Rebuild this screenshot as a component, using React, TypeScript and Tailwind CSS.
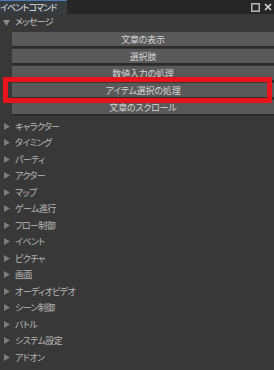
import React from 'react';

const font = "font-['Noto_Sans_CJK_JP','Noto_Sans',sans-serif] [font-feature-settings:'palt']";

const Arrow = ({ open }: { open?: boolean }) => (
    <svg width="7" height="7" viewBox="0 0 7 7" className="shrink-0">
        {open ? <polygon points="0,1 7,1 3.5,7" fill="#8a8a8a" /> : <polygon points="1,0 7,3.5 1,7" fill="#7c7c7c" />}
    </svg>
);

const buttons = ['文章の表示', '選択肢', '数値入力の処理', 'アイテム選択の処理', '文章のスクロール'];

const groups = [
    'キャラクター',
    'タイミング',
    'パーティ',
    'アクター',
    'マップ',
    'ゲーム進行',
    'フロー制御',
    'イベント',
    'ピクチャ',
    '画面',
    'オーディオビデオ',
    'シーン制御',
    'バトル',
    'システム設定',
    'アドオン',
];

export default function App() {
    return (
        <div className={`relative w-[274px] h-[370px] flex flex-col bg-[#383838] overflow-hidden ${font}`}>
            {/* header strip */}
            <div className="h-[14px] flex bg-[#262626] shrink-0">
                <div className="w-[67px] bg-[#363b41] border-t border-[#4a7bb0] flex items-center whitespace-nowrap overflow-hidden text-[9px] leading-none text-[#e4e4e4] tracking-[-0.9px]">
                    イベントコマンド
                </div>
                <div className="flex-1" />
                <div className="flex items-center gap-[4px] pr-[2px]">
                    <svg width="9" height="9" viewBox="0 0 9 9">
                        <rect x="0.75" y="0.75" width="7.5" height="7.5" fill="none" stroke="#b8b8b8" strokeWidth="1.5" />
                    </svg>
                    <svg width="8" height="8" viewBox="0 0 8 8">
                        <path d="M1 1 L7 7 M7 1 L1 7" stroke="#d8d8d8" strokeWidth="1.6" />
                    </svg>
                </div>
            </div>

            {/* message group */}
            <div className="h-[16px] flex items-center gap-[5px] pl-[3px] text-[9px] tracking-[-0.6px] text-[#c6c6c6]">
                <Arrow open />
                <span>メッセージ</span>
            </div>
            <div className="flex flex-col gap-[1px] pl-[12px] pt-[2px]">
                {buttons.map((b) => (
                    <div
                        key={b}
                        className="h-[16px] bg-[#595959] border-b-2 border-[#2b2b2b] flex items-center justify-center text-[9px] leading-none tracking-[-0.2px] text-[#d6d6d6]"
                    >
                        {b}
                    </div>
                ))}
            </div>

            {/* other groups */}
            <div className="flex flex-col pt-[2px]">
                {groups.map((g) => (
                    <div key={g} className="h-[16.5px] flex items-center gap-[5px] pl-[3px] text-[9px] tracking-[-0.6px] text-[#b8b8b8]">
                        <Arrow />
                        <span>{g}</span>
                    </div>
                ))}
            </div>

            {/* highlight frame */}
            <div className="absolute left-[3px] top-[77px] w-[269px] h-[26px] border-[5px] border-[#e8141c] pointer-events-none" />
        </div>
    );
}
